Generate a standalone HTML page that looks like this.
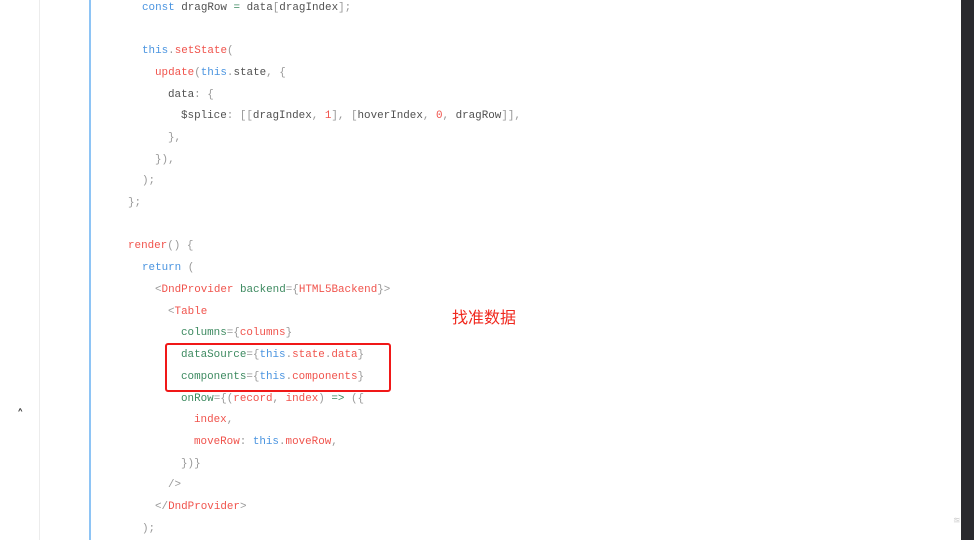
<!DOCTYPE html>
<html><head><meta charset="utf-8"><style>
html,body{margin:0;padding:0;width:974px;height:540px;overflow:hidden;background:#fff;position:relative}
.l{position:absolute;font-family:"Liberation Mono",monospace;font-size:10.9px;color:#505050;white-space:pre;line-height:14px}
.k{color:#4a94e0}.r{color:#f0534c}.g{color:#3d8a60}.p{color:#999}
</style></head><body>
<div style="position:absolute;left:39px;top:0;width:1px;height:540px;background:#ececec"></div>
<div style="position:absolute;left:89px;top:0;width:2px;height:540px;background:#8ec4f5"></div>
<div style="position:absolute;left:961px;top:0;width:13px;height:540px;background:#2a2a2e"></div>
<div style="position:absolute;left:17px;top:408px;font-family:'DejaVu Sans',sans-serif;font-size:13px;color:#444;font-weight:bold">&#708;</div>
<div style="position:absolute;left:953px;top:516px;font-family:'DejaVu Sans',sans-serif;font-size:9px;color:#ccc">≊</div>

<div class="l" style="left:142px;top:1px"><span class="k">const</span> dragRow <span class="g">=</span> data<span class="p">[</span>dragIndex<span class="p">];</span></div>
<div class="l" style="left:142px;top:44px"><span class="k">this</span><span class="p">.</span><span class="r">setState</span><span class="p">(</span></div>
<div class="l" style="left:155px;top:66px"><span class="r">update</span><span class="p">(</span><span class="k">this</span><span class="p">.</span>state<span class="p">, {</span></div>
<div class="l" style="left:168px;top:88px">data<span class="p">: {</span></div>
<div class="l" style="left:181px;top:109px">$splice<span class="p">: [[</span>dragIndex<span class="p">, </span><span class="r">1</span><span class="p">], [</span>hoverIndex<span class="p">, </span><span class="r">0</span><span class="p">, </span>dragRow<span class="p">]],</span></div>
<div class="l" style="left:168px;top:131px"><span class="p">},</span></div>
<div class="l" style="left:155px;top:153px"><span class="p">}),</span></div>
<div class="l" style="left:142px;top:174px"><span class="p">);</span></div>
<div class="l" style="left:128px;top:196px"><span class="p">};</span></div>
<div class="l" style="left:128px;top:239px"><span class="r">render</span><span class="p">() {</span></div>
<div class="l" style="left:142px;top:261px"><span class="k">return</span> <span class="p">(</span></div>
<div class="l" style="left:155px;top:283px"><span class="p">&lt;</span><span class="r">DndProvider</span> <span class="g">backend</span><span class="p">={</span><span class="r">HTML5Backend</span><span class="p">}&gt;</span></div>
<div class="l" style="left:168px;top:305px"><span class="p">&lt;</span><span class="r">Table</span></div>
<div class="l" style="left:181px;top:326px"><span class="g">columns</span><span class="p">={</span><span class="r">columns</span><span class="p">}</span></div>
<div class="l" style="left:181px;top:348px"><span class="g">dataSource</span><span class="p">={</span><span class="k">this</span><span class="p">.</span><span class="r">state</span><span class="p">.</span><span class="r">data</span><span class="p">}</span></div>
<div class="l" style="left:181px;top:370px"><span class="g">components</span><span class="p">={</span><span class="k">this</span><span class="p">.</span><span class="r">components</span><span class="p">}</span></div>
<div class="l" style="left:181px;top:392px"><span class="g">onRow</span><span class="p">={(</span><span class="r">record</span><span class="p">, </span><span class="r">index</span><span class="p">) </span><span class="g">=&gt;</span><span class="p"> ({</span></div>
<div class="l" style="left:194px;top:413px"><span class="r">index</span><span class="p">,</span></div>
<div class="l" style="left:194px;top:435px"><span class="r">moveRow</span><span class="p">: </span><span class="k">this</span><span class="p">.</span><span class="r">moveRow</span><span class="p">,</span></div>
<div class="l" style="left:181px;top:457px"><span class="p">})}</span></div>
<div class="l" style="left:168px;top:478px"><span class="p">/&gt;</span></div>
<div class="l" style="left:155px;top:500px"><span class="p">&lt;/</span><span class="r">DndProvider</span><span class="p">&gt;</span></div>
<div class="l" style="left:142px;top:522px"><span class="p">);</span></div>

<div style="position:absolute;left:165px;top:343px;width:222px;height:45px;border:2px solid #f01818;border-radius:3px"></div>
<div style="position:absolute;left:452px;top:306px;font-family:'Noto Sans CJK SC',sans-serif;font-size:16px;color:#f0281e;line-height:20px">找准数据</div>
</body></html>
